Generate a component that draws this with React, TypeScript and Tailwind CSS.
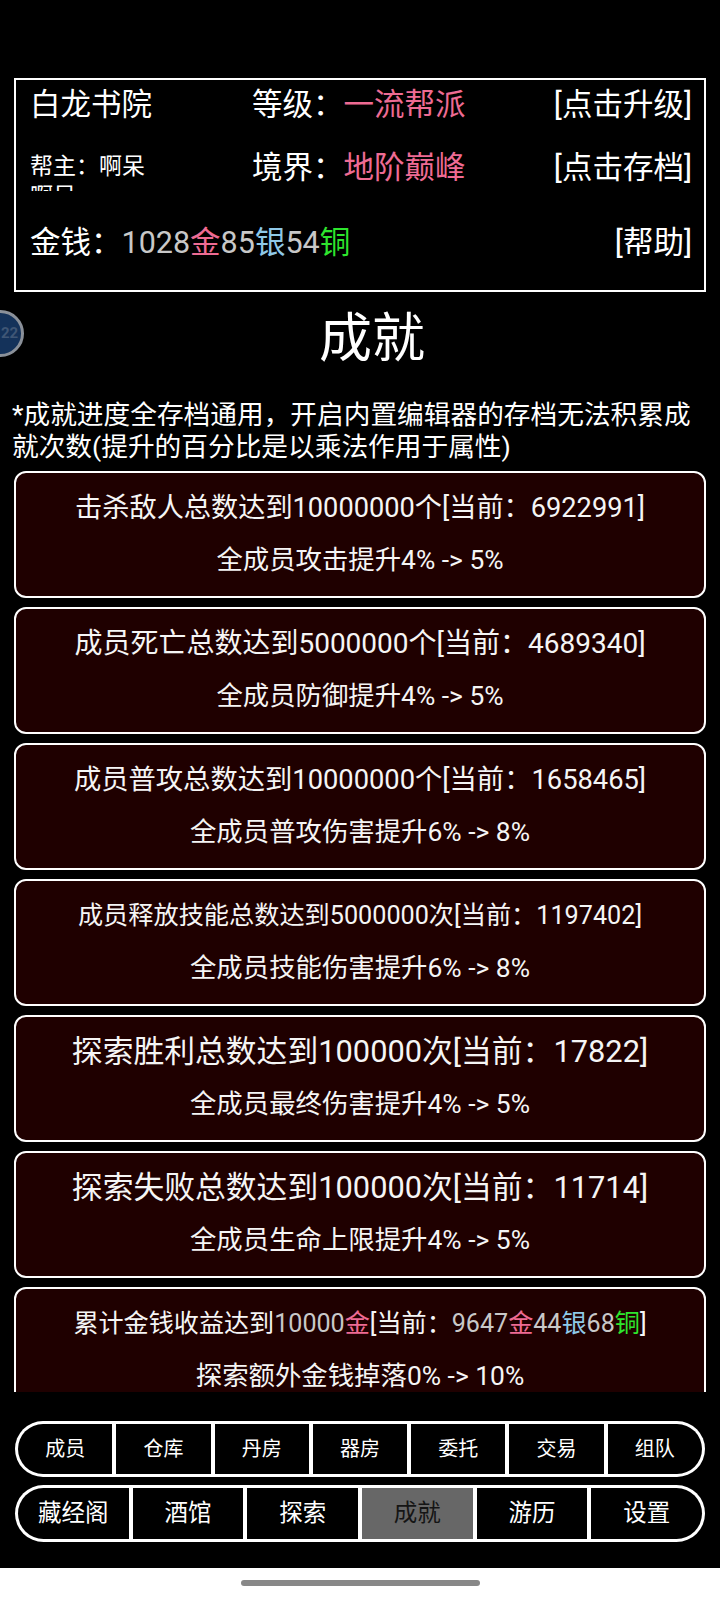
import React from 'react';

type Seg = { t: string; c?: string };

interface Achievement {
  title: Seg[];
  size: string;
  reward: string;
}

const PINK = 'text-[#ee6b93]';
const GRAY = 'text-[#c8c8c8]';
const BLUE = 'text-[#8fc9e8]';
const GREEN = 'text-[#2ee62e]';

const achievements: Achievement[] = [
  {
    title: [{ t: '击杀敌人总数达到10000000个[当前：6922991]' }],
    size: 'text-[27.2px]',
    reward: '全成员攻击提升4% -> 5%',
  },
  {
    title: [{ t: '成员死亡总数达到5000000个[当前：4689340]' }],
    size: 'text-[28px]',
    reward: '全成员防御提升4% -> 5%',
  },
  {
    title: [{ t: '成员普攻总数达到10000000个[当前：1658465]' }],
    size: 'text-[27.3px]',
    reward: '全成员普攻伤害提升6% -> 8%',
  },
  {
    title: [{ t: '成员释放技能总数达到5000000次[当前：1197402]' }],
    size: 'text-[25.2px]',
    reward: '全成员技能伤害提升6% -> 8%',
  },
  {
    title: [{ t: '探索胜利总数达到100000次[当前：17822]' }],
    size: 'text-[30.8px]',
    reward: '全成员最终伤害提升4% -> 5%',
  },
  {
    title: [{ t: '探索失败总数达到100000次[当前：11714]' }],
    size: 'text-[30.8px]',
    reward: '全成员生命上限提升4% -> 5%',
  },
  {
    title: [
      { t: '累计金钱收益达到' },
      { t: '10000', c: GRAY },
      { t: '金', c: PINK },
      { t: '[当前：' },
      { t: '9647', c: GRAY },
      { t: '金', c: PINK },
      { t: '44', c: GRAY },
      { t: '银', c: BLUE },
      { t: '68', c: GRAY },
      { t: '铜', c: GREEN },
      { t: ']' },
    ],
    size: 'text-[25.1px]',
    reward: '探索额外金钱掉落0% -> 10%',
  },
];

const topTabs = ['成员', '仓库', '丹房', '器房', '委托', '交易', '组队'];
const bottomTabs = ['藏经阁', '酒馆', '探索', '成就', '游历', '设置'];

const AchievementCard = ({ item }: { item: Achievement }) => (
  <div className="h-[127px] shrink-0 border-2 border-white rounded-[12px] bg-[#1f0000] flex flex-col items-center pt-[15px] text-[#f5f5f5]">
    <div className={`h-[40px] flex items-center whitespace-nowrap ${item.size}`}>
      {item.title.map((s, i) => (
        <span key={i} className={s.c}>
          {s.t}
        </span>
      ))}
    </div>
    <div className="mt-[13px] h-[40px] flex items-center whitespace-nowrap text-[26.4px]">
      {item.reward}
    </div>
  </div>
);

const TabRow = ({
  tabs,
  active,
  textSize,
  height,
}: {
  tabs: string[];
  active?: string;
  textSize: string;
  height: string;
}) => (
  <div className={`mx-[15px] ${height} bg-white rounded-full p-[3px] flex gap-[4px]`}>
    {tabs.map((tab, i) => {
      const first = i === 0;
      const last = i === tabs.length - 1;
      const isActive = tab === active;
      return (
        <div
          key={tab}
          className={`flex-1 flex items-center justify-center ${textSize} ${
            isActive ? 'bg-[#676767] text-[#151515]' : 'bg-black text-white'
          } ${first ? 'rounded-l-full' : ''} ${last ? 'rounded-r-full' : ''}`}
        >
          {tab}
        </div>
      );
    })}
  </div>
);

const App = () => {
  return (
    <div className="relative w-[720px] h-[1600px] bg-black overflow-hidden flex flex-col text-white font-[family-name:Roboto,'Noto_Sans_CJK_SC',sans-serif]">
      {/* floating bubble on the left edge */}
      <div className="absolute left-[-23px] top-[310px] w-[47px] h-[47px] rounded-full bg-[#14325a] border-[3px] border-[#8a9099] flex items-center justify-center">
        <span className="ml-[18px] text-[15px] font-bold text-[#3f5675]">22</span>
      </div>

      {/* sect info */}
      <div className="mt-[78px] mx-[14px] h-[214px] shrink-0 border-2 border-white pl-[14px] pr-[12px] flex flex-col text-[30.5px]">
        <div className="h-[50px] flex items-center">
          <div className="w-[222px]">白龙书院</div>
          <div className="flex-1">
            等级：<span className={PINK}>一流帮派</span>
          </div>
          <div>[点击升级]</div>
        </div>
        <div className="h-[76px] flex items-center">
          <div className="w-[222px] self-start mt-[22px] h-[39px] overflow-hidden">
            <div className="w-[125px] text-[23px] leading-[30px]">帮主：啊呆啊呆</div>
          </div>
          <div className="flex-1">
            境界：<span className={PINK}>地阶巅峰</span>
          </div>
          <div>[点击存档]</div>
        </div>
        <div className="h-[74px] flex items-center">
          <div className="flex-1">
            金钱：<span className={GRAY}>1028</span>
            <span className={PINK}>金</span>
            <span className={GRAY}>85</span>
            <span className={BLUE}>银</span>
            <span className={GRAY}>54</span>
            <span className={GREEN}>铜</span>
          </div>
          <div>[帮助]</div>
        </div>
      </div>

      <div className="mt-[17px] h-[60px] shrink-0 pl-[24px] text-center text-[53px] leading-[60px]">成就</div>

      <div className="mt-[30px] px-[12px] shrink-0 text-[26.7px] leading-[32px] whitespace-nowrap">
        *成就进度全存档通用，开启内置编辑器的存档无法积累成
        <br />
        就次数(提升的百分比是以乘法作用于属性)
      </div>

      {/* achievement list, clipped like a scroll view */}
      <div className="mt-[8px] h-[921px] shrink-0 overflow-hidden px-[14px] flex flex-col gap-[9px]">
        {achievements.map((a, i) => (
          <AchievementCard key={i} item={a} />
        ))}
      </div>

      <div className="mt-[29px] shrink-0">
        <TabRow tabs={topTabs} textSize="text-[20px]" height="h-[56px]" />
      </div>
      <div className="mt-[8px] shrink-0">
        <TabRow tabs={bottomTabs} active="成就" textSize="text-[23.5px]" height="h-[57px]" />
      </div>

      <div className="mt-auto h-[32px] shrink-0 bg-white flex justify-center pt-[12px]">
        <div className="w-[239px] h-[6px] rounded-full bg-[#888888]" />
      </div>
    </div>
  );
};

export default App;
